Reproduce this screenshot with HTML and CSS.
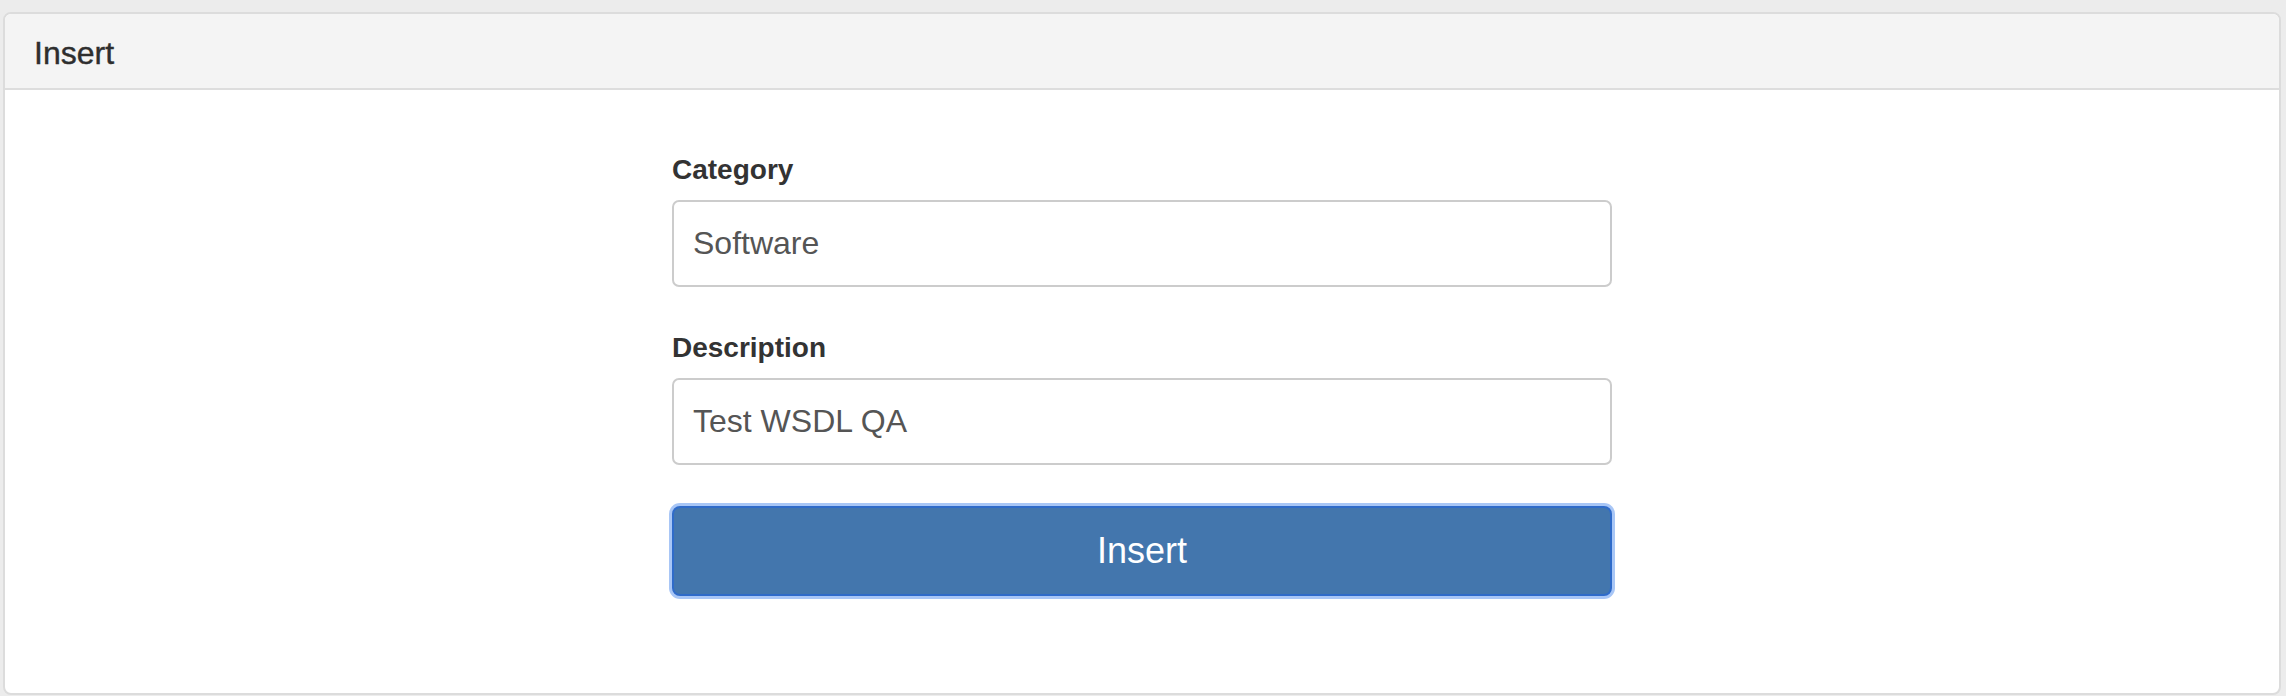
FILE: index.html
```html
<!DOCTYPE html>
<html lang="en">
<head>
<meta charset="utf-8">
<title>Insert</title>
<link rel="stylesheet" href="styles.css">
</head>
<body>
<div class="panel">
  <div class="panel-heading">
    <h3 class="panel-title">Insert</h3>
  </div>
  <div class="panel-body">
    <form class="insert-form">
      <div class="form-group">
        <label class="field-label" for="category">Category</label>
        <input class="field-input" id="category" type="text" value="Software">
      </div>
      <div class="form-group">
        <label class="field-label" for="description">Description</label>
        <input class="field-input" id="description" type="text" value="Test WSDL QA">
      </div>
      <button class="btn-insert" type="button">Insert</button>
    </form>
  </div>
</div>
</body>
</html>
```

FILE: styles.css
```css
* {
  box-sizing: border-box;
}

html, body {
  margin: 0;
  height: 696px;
  overflow: hidden;
}

body {
  background: #ececec;
  padding: 12px 5px 0 3px;
  font-family: "Liberation Sans", Arial, sans-serif;
  color: #333333;
}

.panel {
  height: 683px;
  background: #ffffff;
  border: 2px solid #dcdcdc;
  border-radius: 8px;
}

.panel-heading {
  background: #f4f4f4;
  border-bottom: 2px solid #dddddd;
  border-radius: 6px 6px 0 0;
  padding: 22px 29px 17px;
}

.panel-title {
  margin: 0;
  font-size: 32px;
  line-height: 35px;
  font-weight: normal;
  color: #2e2e2e;
  -webkit-text-stroke: 0.4px #2e2e2e;
}

.panel-body {
  padding-top: 60px;
}

.insert-form {
  width: 940px;
  margin: 0 auto;
}

.form-group {
  margin-bottom: 41px;
}

.field-label {
  display: block;
  font-size: 28px;
  line-height: 40px;
  font-weight: bold;
  color: #333333;
  margin-bottom: 10px;
}

.field-input {
  display: block;
  width: 100%;
  height: 87px;
  padding: 0 19px;
  border: 2px solid #cccccc;
  border-radius: 7px;
  background: #ffffff;
  font-family: "Liberation Sans", Arial, sans-serif;
  font-size: 32px;
  color: #555555;
  outline: none;
}

.btn-insert {
  display: block;
  width: 100%;
  height: 90px;
  background: #4376ad;
  border: 2px solid #2f6bc9;
  border-radius: 8px;
  box-shadow: 0 0 0 3px #a8c6f6;
  color: #ffffff;
  font-family: "Liberation Sans", Arial, sans-serif;
  font-size: 36px;
  cursor: pointer;
}
```
